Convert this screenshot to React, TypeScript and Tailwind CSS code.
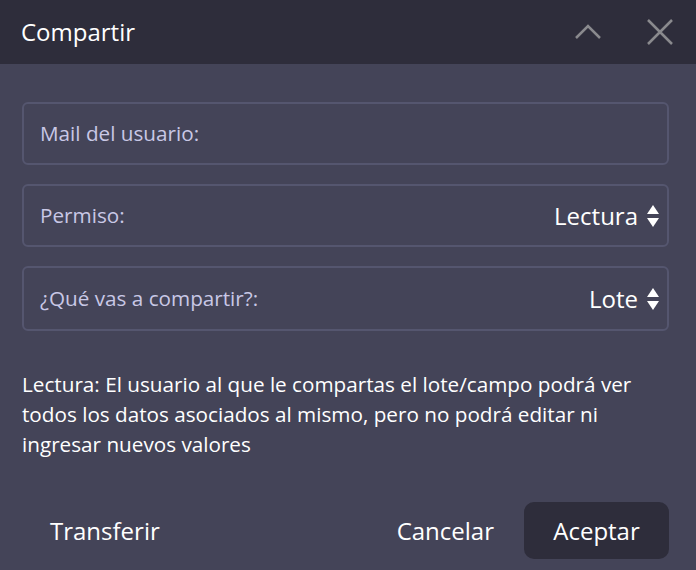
export default function App() {
  const font = { fontFamily: '"Open Sans", sans-serif' };
  return (
    <div className="w-[696px] h-[570px] bg-[#444458] flex flex-col" style={font}>
      <div className="h-16 bg-[#2e2d3b] flex items-center pl-[21px] pr-[22px]">
        <span className="text-[24px] text-white flex-1">Compartir</span>
        <svg width="28" height="16" viewBox="0 0 28 16" className="mr-[44px]">
          <path d="M2 14 L14 2 L26 14" stroke="#8a8a8e" strokeWidth="2.5" fill="none" />
        </svg>
        <svg width="28" height="28" viewBox="0 0 28 28">
          <path d="M2 2 L26 26 M26 2 L2 26" stroke="#8a8a8e" strokeWidth="2.5" fill="none" />
        </svg>
      </div>

      <div className="pl-[22px] pr-[27px] pt-[38px] flex flex-col gap-[19px]">
        <div className="h-[63px] rounded-[6px] border-2 border-[#55566f] flex items-center px-4">
          <span className="text-[20.7px] text-[#c9c8e6]">Mail del usuario:</span>
        </div>
        <div className="h-[63px] rounded-[6px] border-2 border-[#55566f] flex items-center pl-4 pr-2">
          <span className="text-[20.7px] text-[#c9c8e6] flex-1">Permiso:</span>
          <span className="text-[24px] text-white">Lectura</span>
          <Updown />
        </div>
        <div className="h-[65px] rounded-[6px] border-2 border-[#55566f] flex items-center pl-4 pr-2">
          <span className="text-[20.7px] text-[#c9c8e6] flex-1">¿Qué vas a compartir?:</span>
          <span className="text-[24px] text-white">Lote</span>
          <Updown />
        </div>
      </div>

      <p className="pl-[22px] pr-[27px] mt-[38px] text-[20.7px] leading-[30px] text-white">
        Lectura: El usuario al que le compartas el lote/campo podrá ver todos los datos asociados al mismo, pero no podrá editar ni ingresar nuevos valores
      </p>

      <div className="mt-auto mb-[11px] pl-[27px] pr-[27px] flex items-center">
        <button className="text-[24px] text-white px-[23px] h-[57px] flex-1 text-left">Transferir</button>
        <button className="text-[24px] text-white px-[30px] h-[57px]">Cancelar</button>
        <button className="text-[24px] text-white w-[145px] h-[57px] rounded-[10px] bg-[#2e2d3b]">Aceptar</button>
      </div>
    </div>
  );
}

function Updown() {
  return (
    <svg width="12" height="24" viewBox="0 0 12 24" className="ml-[9px]">
      <path d="M6 1 L12 10 L0 10 Z" fill="#ffffff" />
      <path d="M6 23 L12 14 L0 14 Z" fill="#ffffff" />
    </svg>
  );
}
